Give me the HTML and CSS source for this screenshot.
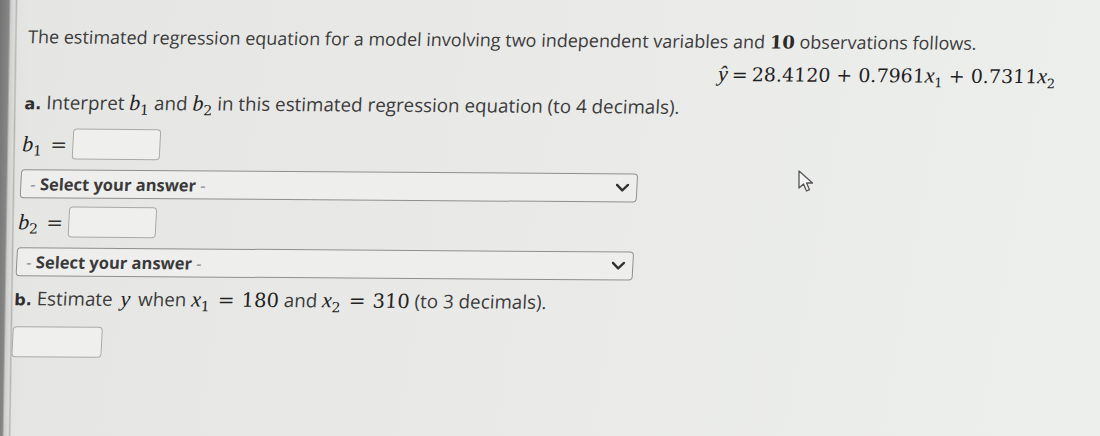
FILE: index.html
```html
<!DOCTYPE html>
<html>
<head>
<meta charset="utf-8">
<link rel="stylesheet" href="styles.css">
</head>
<body>
<div class="screen">
  <div class="content">
    <p class="intro">The estimated regression equation for a model involving two independent variables and <span class="num">10</span> observations follows.</p>
    <div class="equation"><span class="mi">ŷ</span><span class="rel">=</span>28.4120<span class="bin">+</span>0.7961<span class="mi">x</span><sub>1</sub><span class="bin">+</span>0.7311<span class="mi">x</span><sub>2</sub></div>
    <p class="part"><b class="tag">a.</b> Interpret <span class="mi">b</span><sub class="ms">1</sub> and <span class="mi">b</span><sub class="ms">2</sub> in this estimated regression equation (to 4 decimals).</p>
    <div class="field">
      <span class="label"><span class="mi">b</span><sub class="ms">1</sub><span class="eq">=</span></span>
      <span class="input"></span>
    </div>
    <div class="select">
      <span class="sel-text"><span class="dash">-</span> Select your answer <span class="dash">-</span></span>
      <svg class="chev" width="14" height="9" viewBox="0 0 14 9"><path d="M1.5 1.5 L7 7 L12.5 1.5" fill="none" stroke="#333" stroke-width="2.4" stroke-linecap="round" stroke-linejoin="round"/></svg>
    </div>
    <div class="field f2">
      <span class="label"><span class="mi">b</span><sub class="ms">2</sub><span class="eq">=</span></span>
      <span class="input"></span>
    </div>
    <div class="select">
      <span class="sel-text"><span class="dash">-</span> Select your answer <span class="dash">-</span></span>
      <svg class="chev" width="14" height="9" viewBox="0 0 14 9"><path d="M1.5 1.5 L7 7 L12.5 1.5" fill="none" stroke="#333" stroke-width="2.4" stroke-linecap="round" stroke-linejoin="round"/></svg>
    </div>
    <p class="part pb"><b class="tag">b.</b> Estimate <span class="mi yv">y</span> when <span class="mi">x</span><sub class="ms">1</sub><span class="mrel">=</span><span class="mn">180</span> and <span class="mi">x</span><sub class="ms">2</sub><span class="mrel">=</span><span class="mn">310</span> (to 3 decimals).</p>
    <div class="input wide"></div>
  </div>
</div>
<svg class="cursor" width="22" height="26" viewBox="0 0 22 26"><path d="M2 2 L2 19 L6.5 15 L9.5 22 L12.5 20.7 L9.6 14 L15.5 14 Z" fill="#f4f5f4" stroke="#555" stroke-width="1.3" stroke-linejoin="round"/></svg>
</body>
</html>
```

FILE: styles.css
```css
html, body {
  margin: 0;
  height: 100%;
}
body {
  width: 1100px;
  height: 436px;
  overflow: hidden;
  position: relative;
  background:
    linear-gradient(90.9deg, #727372 0, #858685 9px, #cfd0ce 11px, #dcdddb 15px, #b5b6b4 16.5px, #e3e4e2 18px, rgba(233,234,232,0) 30px),
    linear-gradient(100deg, #e5e6e4 0%, #e9eae8 45%, #edefed 100%);
  font-family: "Open Sans", "DejaVu Sans", sans-serif;
  color: #3b3b3b;
}
.screen {
  transform: skew(-3deg, 0.4deg);
  transform-origin: 0 0;
}
.content {
  padding: 26px 0 0 30px;
  width: 1029px;
}
.intro {
  margin: 0;
  font-size: 18px;
  line-height: 20px;
  height: 20px;
  white-space: nowrap;
}
.num {
  font-family: "DejaVu Serif", serif;
  font-weight: bold;
  font-size: 18px;
  color: #2a2a2a;
}
.equation {
  margin-top: 11px;
  height: 24px;
  line-height: 24px;
  text-align: right;
  font-family: "DejaVu Serif", serif;
  font-size: 19px;
  color: #1f1f1f;
  white-space: nowrap;
}
.equation sub {
  font-family: "DejaVu Serif", serif;
  font-size: 13px;
  line-height: 0;
}
.rel {
  margin: 0 4px;
}
.bin {
  margin: 0 6px;
}
.mi {
  font-family: "Liberation Serif", "DejaVu Serif", serif;
  font-style: italic;
  font-size: 22px;
  color: #222;
}
.yv {
  margin: 0 3px;
}
.ms {
  font-family: "DejaVu Serif", serif;
  font-size: 14px;
  line-height: 0;
  color: #222;
}
.mn {
  font-family: "DejaVu Serif", serif;
  font-size: 19.5px;
  color: #222;
}
.mrel {
  font-family: "DejaVu Serif", serif;
  font-size: 20px;
  color: #222;
  margin: 0 7px 0 8px;
}
.part {
  margin: 11px 0 0 0;
  font-size: 18.8px;
  line-height: 20px;
  height: 20px;
  white-space: nowrap;
}
.part.pb {
  margin-top: 12px;
  font-size: 18.8px;
}
.tag {
  font-family: "DejaVu Sans", sans-serif;
  font-size: 16px;
  color: #2e2e2e;
}
.field {
  margin-top: 16px;
  display: flex;
  align-items: center;
  height: 31px;
}
.field.f2 {
  margin-top: 8px;
}
.label {
  width: 50px;
  white-space: nowrap;
}
.eq {
  font-family: "DejaVu Serif", serif;
  font-size: 20px;
  color: #333;
  margin-left: 8px;
}
.input {
  display: block;
  box-sizing: border-box;
  width: 88px;
  height: 31px;
  border: 1.5px solid #a9aaa8;
  border-radius: 4px;
  background: #eff0ee;
}
.input.wide {
  width: 90px;
  margin-top: 18px;
}
.select {
  margin-top: 10px;
  box-sizing: border-box;
  width: 617px;
  height: 29px;
  border: 1.5px solid #8f908e;
  border-radius: 4px;
  background: #eeefed;
  display: flex;
  align-items: center;
  justify-content: space-between;
  padding: 0 7px 0 9px;
}
.sel-text {
  font-weight: bold;
  font-size: 16.5px;
  color: #3a3a3a;
}
.dash {
  font-weight: normal;
  color: #888;
}
.chev {
  display: block;
}
.cursor {
  position: absolute;
  left: 797px;
  top: 169px;
}
```
